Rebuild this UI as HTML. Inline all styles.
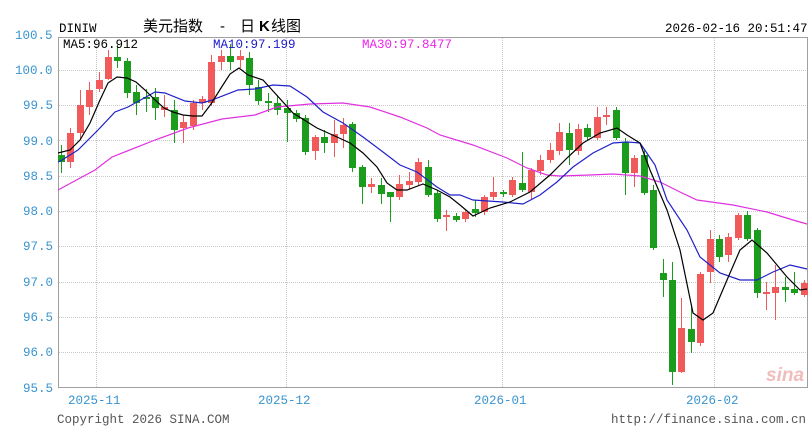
<!DOCTYPE html>
<html><head><meta charset="utf-8"><style>
html,body{margin:0;padding:0;background:#fff;width:812px;height:435px;overflow:hidden}
svg{display:block}
text{font-family:"Liberation Mono","DejaVu Sans Mono",monospace}
.cj{font-family:"Liberation Sans","Noto Sans CJK SC",sans-serif}
</style></head><body>
<svg id="s" width="812" height="435" viewBox="0 0 812 435" xmlns="http://www.w3.org/2000/svg">
<g id="grid" stroke="#c8c8c8" stroke-dasharray="1,1" stroke-width="1"></g>
<rect x="58.5" y="37.5" width="749" height="350" fill="none" stroke="#a0a0a0"/>
<g id="c"></g>
<g id="ma" fill="none" stroke-width="1.2"></g>
<g font-size="12.5" fill="#3a94d0">
<text x="15" y="39">100.5</text><text x="15" y="74">100.0</text><text x="23" y="109">99.5</text><text x="23" y="145">99.0</text><text x="23" y="180">98.5</text><text x="23" y="215">98.0</text><text x="23" y="250">97.5</text><text x="23" y="286">97.0</text><text x="23" y="321">96.5</text><text x="23" y="356">96.0</text><text x="23" y="392">95.5</text>
<text x="68" y="404">2025-11</text><text x="258" y="404">2025-12</text><text x="474" y="404">2026-01</text><text x="686" y="404">2026-02</text>
</g>
<text x="59" y="32" font-size="12.5" fill="#000">DINIW</text>
<g font-size="15" fill="#000" class="cj">
<text x="143" y="31" class="cj">美元指数</text>
<text x="220" y="31" class="cj">-</text>
<text x="240" y="31" class="cj">日</text>
<text x="259" y="31" class="cj" font-weight="bold">K</text>
<text x="271" y="31" class="cj">线图</text>
</g>
<text x="665" y="32" font-size="12.5" fill="#000">2026-02-16 20:51:47</text>
<text x="63" y="48" font-size="12.5" fill="#000">MA5:96.912</text>
<text x="213" y="48" font-size="12.5" fill="#1a1acc">MA10:97.199</text>
<text x="362" y="48" font-size="12.5" fill="#ee22ee">MA30:97.8477</text>
<text x="57" y="423" font-size="12.5" fill="#555">Copyright 2026 SINA.COM</text>
<text x="611" y="423" font-size="12.5" fill="#555">http://finance.sina.com.cn</text>
<text x="766" y="381" font-size="19" font-style="italic" font-weight="bold" fill="#f0bcbc" class="cj">sina</text>
</svg>
<script>
var NS="http://www.w3.org/2000/svg";
function el(p,t,a){var e=document.createElementNS(NS,t);for(var k in a)e.setAttribute(k,a[k]);p.appendChild(e);return e;}
var g=document.getElementById('grid');
[70,105,140,176,211,246,282,317,352].forEach(function(y){el(g,'line',{x1:59,x2:807,y1:y+.5,y2:y+.5});});
[96,286,502,714].forEach(function(x){el(g,'line',{x1:x+.5,x2:x+.5,y1:38,y2:387});});
var C=[[155,162,145,173,0],[133,162,128,168,1],[105,133,90,140,1],[90,107,82,115,1],[80,89,72,92,1],[57,79,50,80,1],[57,61,45,68,0],[61,93,58,98,0],[92,103,85,115,0],[97,99,89,112,0],[97,108,88,120,0],[107,110,95,117,1],[110,130,100,143,0],[122,128,115,143,1],[103,126,100,130,1],[99,103,96,110,1],[62,103,55,106,1],[56,62,50,70,1],[56,62,44,70,0],[56,60,50,68,1],[58,85,52,95,0],
[87,101,80,105,0],[101,103,93,112,0],[103,110,95,115,0],[108,113,100,142,0],[113,119,110,122,0],[118,152,115,155,0],[137,151,135,160,1],[137,143,130,153,0],[134,143,120,157,1],[125,134,118,148,1],[124,168,122,172,0],[167,187,165,204,0],[184,187,178,193,1],[185,194,178,204,0],[192,197,192,222,0],[184,197,175,200,1],[181,185,172,190,1],[162,182,158,185,1],[167,195,160,197,0],[193,219,190,222,0],[215,217,210,231,1],
[216,220,213,222,0],[212,219,210,222,1],[209,213,200,217,0],[197,212,195,215,1],[192,197,177,200,1],[192,194,190,197,0],[180,195,177,197,1],[183,190,152,192,0],[170,192,168,200,1],[160,171,155,175,1],[150,160,143,163,1],[132,151,123,155,1],[133,150,123,165,0],[129,151,124,155,1],[128,137,124,140,0],[117,138,107,140,1],[115,117,107,125,1],[110,138,107,140,0],[142,173,138,195,0],[158,173,155,187,1],
[155,193,150,195,0],[190,248,185,250,0],[273,280,259,297,0],[280,372,262,385,0],[328,372,298,373,1],[329,342,307,353,0],[274,343,272,346,1],[239,272,230,283,1],[239,257,235,262,0],[237,255,233,262,1],[215,238,213,240,1],[215,239,211,241,0],[230,293,228,298,0],[292,294,282,310,1],[287,293,265,320,1],[287,290,277,302,0],[289,293,272,295,0],[283,295,280,297,1]];
var cg=document.getElementById('c');
C.forEach(function(d,i){var x=Math.round(61+9.4*i);var col=d[4]?'#f05a5a':'#1c9c1c';
el(cg,'line',{x1:x+.5,x2:x+.5,y1:d[2],y2:d[3],stroke:col});
el(cg,'rect',{x:x-3,y:d[0],width:7,height:Math.max(d[1]-d[0],2),fill:col});});
var mg=document.getElementById('ma');
function pl(pts,col){el(mg,'polyline',{points:pts,stroke:col});}
pl("58,190 95,170 112,157 155,140 188,128 222,119 255,115 277,107 310,104 343,103 370,107 400,117 427,128 440,135 473,145 507,158 527,168 547,175 560,176 590,175 613,174 640,176 660,182 680,192 697,200 733,205 767,212 793,220 807,224","#e030e0");
pl("58,162 62,160 78,150 98,130 115,112 128,107 155,92 165,93 185,101 202,103 212,100 238,90 255,89 273,85 290,86 307,97 323,112 343,123 363,137 383,152 400,165 417,172 437,187 450,195 460,195 473,200 503,202 523,204 540,195 557,182 573,167 593,153 613,143 627,142 640,143 655,165 667,200 687,230 700,257 720,273 740,280 757,280 773,272 790,265 807,269","#2020c8");
pl("58,153 70,150 80,140 90,123 100,100 108,83 117,77 127,78 136,82 145,90 155,100 164,108 173,112 183,115 193,116 202,116 211,104 221,88 230,74 239,68 248,75 263,80 293,113 317,128 337,137 350,143 363,153 377,167 387,183 397,190 407,190 423,184 437,190 450,197 460,205 473,216 490,208 510,202 530,192 550,175 567,158 583,143 600,133 617,128 627,135 640,143 650,170 667,210 680,250 693,313 703,320 713,313 727,280 740,250 752,240 767,253 787,277 800,290 807,289","#000");
</script>
</body></html>
